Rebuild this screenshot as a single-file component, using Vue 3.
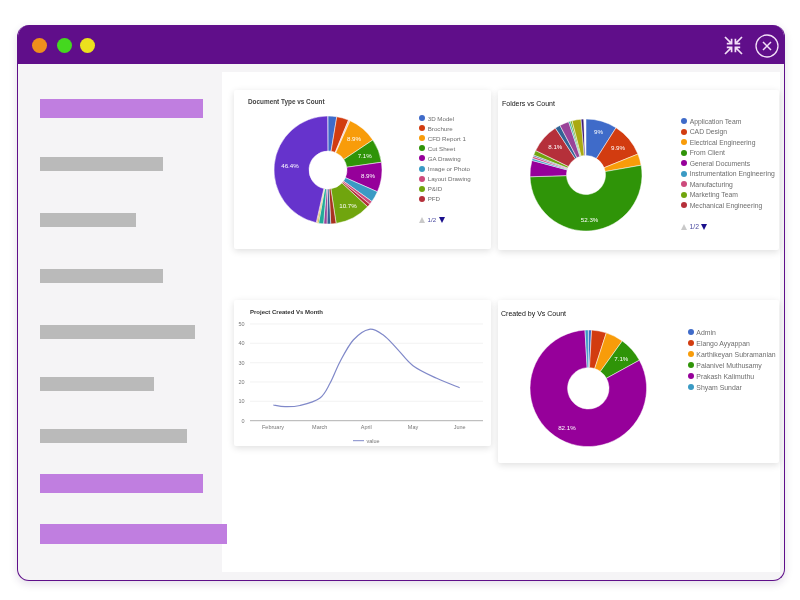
<script setup>
const navBars = [
  { w: 163, h: 19, top: 0, active: true },
  { w: 123, h: 14, top: 39 },
  { w: 96, h: 14, top: 42 },
  { w: 123, h: 14, top: 42 },
  { w: 155, h: 14, top: 42 },
  { w: 114, h: 14, top: 38 },
  { w: 147, h: 14, top: 38 },
  { w: 163, h: 19, top: 31, active: true },
  { w: 187, h: 20, top: 31, active: true }
]

const c = {
  blue: '#3f6bc9', red: '#d23c10', orange: '#f89c0a', green: '#2f9408', purple: '#96009a',
  teal: '#3a9ac4', pink: '#cd4a7c', olive: '#70a50e', brick: '#b5303a', navy: '#316395',
  plum: '#994499', sea: '#22aa99', mustard: '#aaaa11', violet: '#6633cc', amber: '#e67300'
}

const pies = [
  {
    id: 'doc',
    title: 'Document Type vs Count',
    r: 54,
    inner: 19,
    legend: [
      ['3D Model', c.blue], ['Brochure', c.red], ['CFD Report 1', c.orange], ['Cut Sheet', c.green],
      ['GA Drawing', c.purple], ['Image or Photo', c.teal], ['Layout Drawing', c.pink], ['P&ID', c.olive], ['PFD', c.brick]
    ],
    pager: true,
    slices: [
      [2.6, c.blue], [3.6, c.red], [0.5, '#f3c6c0'], [8.9, c.orange], [7.1, c.green], [8.9, c.purple],
      [3.3, c.teal], [1, c.pink], [1, c.brick], [10.7, c.olive], [1.6, '#a8321f'], [1.1, c.navy],
      [1, c.plum], [1.5, c.sea], [0.4, c.mustard], [0.3, c.amber], [46.4, c.violet]
    ],
    labels: [
      ['46.4%', -38, -4.3], ['8.9%', 26, -32], ['7.1%', 36.7, -15], ['8.9%', 40, 5], ['10.7%', 20, 35]
    ]
  },
  {
    id: 'folders',
    title: 'Folders vs Count',
    r: 56,
    inner: 19.5,
    legend: [
      ['Application Team', c.blue], ['CAD Design', c.red], ['Electrical Engineering', c.orange], ['From Client', c.green],
      ['General Documents', c.purple], ['Instrumentation Engineering', c.teal], ['Manufacturing', c.pink],
      ['Marketing Team', c.olive], ['Mechanical Engineering', c.brick]
    ],
    pager: true,
    slices: [
      [9, c.blue], [9.9, c.red], [3.3, c.orange], [52.3, c.green], [4.7, c.purple], [0.6, c.teal], [0.6, c.pink],
      [0.4, c.navy], [1.4, c.olive], [8.6, c.brick], [1.5, c.navy], [2.7, c.plum], [0.5, c.sea], [0.5, c.olive],
      [2.6, c.mustard], [0.8, '#3b1a78'], [0.1, '#ffffff']
    ],
    labels: [
      ['9%', 12.6, -43.7], ['9.9%', 32, -27.3], ['52.3%', 3.6, 44.3], ['8.1%', -30.7, -29]
    ]
  },
  {
    id: 'created',
    title: 'Created by Vs Count',
    r: 58.3,
    inner: 20.7,
    legend: [
      ['Admin', c.blue], ['Elango Ayyappan', c.red], ['Karthikeyan Subramanian', c.orange],
      ['Palanivel Muthusamy', c.green], ['Prakash Kalimuthu', c.purple], ['Shyam Sundar', c.teal]
    ],
    pager: false,
    slices: [
      [0.9, c.blue], [4.1, c.red], [4.9, c.orange], [7.1, c.green], [82.1, c.purple], [0.9, c.teal]
    ],
    labels: [
      ['7.1%', 33, -29.7], ['82.1%', -21.4, 38.7]
    ]
  }
]

function point(cx, r, pct) {
  const a = (pct / 100) * Math.PI * 2
  return [cx + r * Math.sin(a), cx - r * Math.cos(a)]
}

function slicePaths(pie) {
  const mid = pie.r + 1
  let from = 0
  return pie.slices.map(([pct, color]) => {
    const to = from + pct
    const [x1, y1] = point(mid, pie.r, from)
    const [x2, y2] = point(mid, pie.r, to)
    const [x3, y3] = point(mid, pie.inner, to)
    const [x4, y4] = point(mid, pie.inner, from)
    const big = pct > 50 ? 1 : 0
    from = to
    return {
      color,
      d: `M${x1} ${y1}A${pie.r} ${pie.r} 0 ${big} 1 ${x2} ${y2}L${x3} ${y3}A${pie.inner} ${pie.inner} 0 ${big} 0 ${x4} ${y4}Z`
    }
  })
}

const gridYs = [324, 343.3, 362.7, 382, 401.3]
const yTicks = [
  ['50', 324], ['40', 343.3], ['30', 362.7], ['20', 382], ['10', 401.3], ['0', 420.7]
]
const months = [
  ['February', 273], ['March', 319.7], ['April', 366.3], ['May', 413], ['June', 459.7]
]

const linePoints = [
  [273.3, 405], [285, 406.7], [300, 405.5], [319.7, 398.3], [330, 383.3], [340, 361.7], [353.3, 340],
  [369.3, 329.3], [383.3, 335], [396.7, 348.3], [413, 365.7], [436.7, 378.3], [459.7, 387.7]
]

// catmull-rom through the sampled points
function smoothPath(pts) {
  let d = `M${pts[0][0]} ${pts[0][1]}`
  for (let i = 0; i < pts.length - 1; i++) {
    const p0 = pts[i - 1] || pts[i]
    const p1 = pts[i]
    const p2 = pts[i + 1]
    const p3 = pts[i + 2] || p2
    const c1x = p1[0] + (p2[0] - p0[0]) / 6
    const c1y = p1[1] + (p2[1] - p0[1]) / 6
    const c2x = p2[0] - (p3[0] - p1[0]) / 6
    const c2y = p2[1] - (p3[1] - p1[1]) / 6
    d += `C${c1x} ${c1y} ${c2x} ${c2y} ${p2[0]} ${p2[1]}`
  }
  return d
}

const linePath = smoothPath(linePoints)
</script>

<template>
  <div class="page">
    <div class="window">
      <header class="titlebar">
        <div class="lights">
          <span class="light orange"></span>
          <span class="light green"></span>
          <span class="light yellow"></span>
        </div>
        <div class="actions">
          <svg class="compress" width="19" height="19" viewBox="0 0 19 19" fill="none" stroke="#f3dff7" stroke-width="1.7">
            <path d="M1 1L6.6 6.6M2.8 7.6H7.6V2.8" />
            <path d="M18 1L12.4 6.6M16.2 7.6H11.4V2.8" />
            <path d="M1 18L6.6 12.4M2.8 11.4H7.6V16.2" />
            <path d="M18 18L12.4 12.4M16.2 11.4H11.4V16.2" />
          </svg>
          <svg width="24" height="24" viewBox="0 0 24 24" fill="none" stroke="#f3dff7">
            <circle cx="12" cy="12" r="11" stroke-width="1.3" />
            <path d="M8 8L16 16M16 8L8 16" stroke-width="1.5" />
          </svg>
        </div>
      </header>

      <div class="body">
        <aside class="sidebar">
          <div
            v-for="(bar, i) in navBars"
            :key="i"
            class="nav-bar"
            :class="{ active: bar.active }"
            :style="{ width: bar.w + 'px', height: bar.h + 'px', marginTop: bar.top + 'px' }"
          ></div>
        </aside>

        <main class="content">
          <section v-for="pie in pies" :key="pie.id" class="card" :class="'card-' + pie.id">
            <h3 class="card-title">{{ pie.title }}</h3>
            <div class="chart-row">
              <svg class="pie" :width="(pie.r + 1) * 2" :height="(pie.r + 1) * 2">
                <path
                  v-for="(s, i) in slicePaths(pie)"
                  :key="i"
                  :d="s.d"
                  :fill="s.color"
                  stroke="#fff"
                  stroke-width="0.5"
                />
                <text
                  v-for="l in pie.labels"
                  :key="l[0] + l[1]"
                  :x="pie.r + 1 + l[1]"
                  :y="pie.r + 1 + l[2]"
                  class="pie-label"
                  text-anchor="middle"
                  dominant-baseline="central"
                >{{ l[0] }}</text>
              </svg>
              <div class="legend">
                <div v-for="item in pie.legend" :key="item[0]" class="legend-item">
                  <span class="legend-dot" :style="{ background: item[1] }"></span>
                  <span>{{ item[0] }}</span>
                </div>
                <div v-if="pie.pager" class="pager">
                  <svg width="6" height="6" viewBox="0 0 6 6"><path d="M3 0L6 6H0Z" fill="#c9c9c9" /></svg>
                  <span>1/2</span>
                  <svg width="6" height="6" viewBox="0 0 6 6"><path d="M0 0H6L3 6Z" fill="#1a0f8c" /></svg>
                </div>
              </div>
            </div>
          </section>

          <section class="card card-line">
            <h3 class="card-title">Project Created Vs Month</h3>
            <svg class="line-chart" width="257" height="129" viewBox="234 317 257 129">
              <line v-for="y in gridYs" :key="y" x1="250" x2="483" :y1="y" :y2="y" stroke="#ececec" stroke-width="0.7" />
              <line x1="250" x2="483" y1="420.7" y2="420.7" stroke="#b0b0b0" stroke-width="1" />
              <text v-for="t in yTicks" :key="t[0]" x="244.5" :y="t[1]" class="tick" text-anchor="end" dominant-baseline="central">{{ t[0] }}</text>
              <text v-for="m in months" :key="m[0]" :x="m[1]" y="427" class="tick" text-anchor="middle" dominant-baseline="central">{{ m[0] }}</text>
              <path :d="linePath" fill="none" stroke="#8089c9" stroke-width="1.2" />
              <line x1="353" x2="364" y1="440.7" y2="440.7" stroke="#8089c9" stroke-width="1" />
              <text x="366.5" y="440.7" class="tick" dominant-baseline="central">value</text>
            </svg>
          </section>
        </main>
      </div>
    </div>
  </div>
</template>

<style>
html, body {
  background: #fff;
}
</style>

<style scoped>
.page {
  width: 800px;
  height: 600px;
  box-sizing: border-box;
  padding: 25px 15px 19px 17px;
  font-family: "Liberation Sans", Arial, sans-serif;
  overflow: hidden;
}

.window {
  height: 100%;
  box-sizing: border-box;
  display: flex;
  flex-direction: column;
  background: #f5f4f6;
  border: 1px solid #5f0f8a;
  border-top: 0;
  border-radius: 12px;
  box-shadow: 0 3px 8px rgba(60, 20, 90, 0.14);
  overflow: hidden;
}

.titlebar {
  height: 39px;
  flex-shrink: 0;
  box-sizing: border-box;
  display: flex;
  align-items: center;
  justify-content: space-between;
  padding: 2px 5px 0 14px;
  background: #600e8a;
}

.lights {
  display: flex;
  align-items: center;
}

.light {
  width: 15px;
  height: 15px;
  border-radius: 50%;
}

.light.orange { background: #ef8f1c; }
.light.green { background: #44d81f; margin-left: 10px; }
.light.yellow { background: #ece01d; margin-left: 8px; }

.actions {
  display: flex;
  align-items: center;
  gap: 12px;
}

.body {
  flex: 1;
  min-height: 0;
  display: flex;
}

.sidebar {
  width: 204px;
  flex-shrink: 0;
  box-sizing: border-box;
  padding: 35px 0 0 22px;
}

.nav-bar {
  position: relative;
  z-index: 1;
  background: #bababa;
}

.nav-bar.active {
  background: #c07ee0;
}

.content {
  flex: 1;
  margin: 8px 4px 8px 0;
  padding: 18px 0 0 12px;
  background: #fff;
  display: grid;
  grid-template-columns: 257px 281px;
  grid-template-rows: 160px auto;
  column-gap: 7px;
  row-gap: 50px;
  align-items: start;
}

.card {
  position: relative;
  background: #fff;
  border-radius: 2px;
  box-shadow: 0 2px 7px rgba(0, 0, 0, 0.13);
  filter: blur(0.4px);
}

.card-title {
  margin: 0;
  font-size: 7px;
  line-height: 10px;
  font-weight: 400;
  color: #111;
}

.chart-row {
  display: flex;
  align-items: flex-start;
}

.pie {
  display: block;
  flex-shrink: 0;
}

.pie-label {
  font-size: 6.2px;
  fill: #fff;
}

.legend {
  font-size: 6.5px;
  color: #6e6e6e;
  white-space: nowrap;
}

.legend-item {
  display: flex;
  align-items: center;
  gap: 2.7px;
}

.legend-dot {
  width: 6px;
  height: 6px;
  border-radius: 50%;
  flex-shrink: 0;
}

.pager {
  display: flex;
  align-items: center;
  gap: 2.5px;
  margin-top: 12px;
  line-height: 8px;
  color: #4a4aa0;
}

.card-doc {
  grid-column: 1;
  grid-row: 1;
  height: 159px;
  padding: 7px 0 0 14px;
  box-sizing: border-box;
}
.card-doc .card-title { font-size: 6.4px; font-weight: 700; color: #444; }
.card-doc .chart-row { margin: 7.5px 0 0 25px; }
.card-doc .legend { margin-left: 36px; margin-top: -1.5px; font-size: 6.2px; }
.card-doc .legend-item { height: 10.1px; gap: 2.7px; }

.card-folders {
  grid-column: 2;
  grid-row: 1;
  height: 160px;
  padding: 9px 0 0 4px;
  box-sizing: border-box;
}
.card-folders .chart-row { margin: 9px 0 0 27px; }
.card-folders .legend { margin-left: 38px; margin-top: -2px; font-size: 6.8px; }
.card-folders .legend-item { height: 10.5px; }

.card-line {
  grid-column: 1;
  grid-row: 2;
  height: 146px;
  padding-top: 7px;
  box-sizing: border-box;
}
.card-line .card-title { padding-left: 16px; font-size: 6px; font-weight: 700; color: #333; }

.line-chart {
  display: block;
}

.tick {
  font-size: 5.5px;
  fill: #777;
}

.card-created {
  grid-column: 2;
  grid-row: 2;
  height: 163px;
  padding: 9px 0 0 3px;
  box-sizing: border-box;
}
.card-created .card-title { font-size: 7px; }
.card-created .chart-row { margin: 9.5px 0 0 28px; }
.card-created .legend { margin-left: 40px; margin-top: -2px; font-size: 6.9px; }
.card-created .legend-item { height: 11.07px; }
</style>
